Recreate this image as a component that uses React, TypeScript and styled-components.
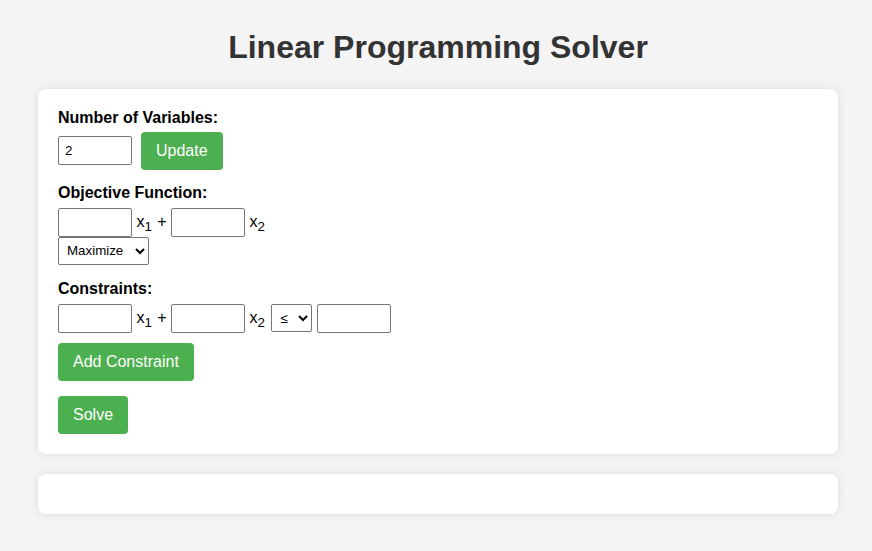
import React, { useState } from "react";
import styled, { createGlobalStyle } from "styled-components";

const GlobalStyle = createGlobalStyle`
  body {
    margin: 8px;
    padding-left: 4px;
    background-color: #f4f4f4;
    font-family: "Liberation Sans", Arial, sans-serif;
  }
`;

const Title = styled.h1`
  text-align: center;
  color: #333;
  font-size: 32px;
  font-weight: bold;
  margin: 21.44px 0 22.44px;
`;

const Card = styled.div`
  max-width: 800px;
  box-sizing: border-box;
  margin: 0 auto 20px;
  padding: 20px;
  background: #fff;
  border-radius: 8px;
  box-shadow: 0 0 10px rgba(0, 0, 0, 0.1);
  min-height: 40px;
`;

const Section = styled.div<{ $gap?: number }>`
  margin-bottom: ${(p) => p.$gap ?? 0}px;
`;

const Label = styled.label<{ $space?: number }>`
  display: block;
  font-weight: bold;
  font-size: 16px;
  line-height: 18px;
  color: #000;
  margin-bottom: ${(p) => p.$space ?? 6}px;
`;

const Row = styled.div`
  display: flex;
  align-items: center;
  gap: 9px;
`;

const Equation = styled.div`
  font-size: 16px;
  line-height: 18px;
  color: #000;
`;

const NumInput = styled.input`
  box-sizing: border-box;
  width: 74px;
  height: 29px;
  padding: 5px 6px;
  border: 1px solid #767676;
  border-radius: 2px;
  font-family: "Liberation Sans", Arial, sans-serif;
  font-size: 13.33px;
  color: #000;
  background: #fff;
  vertical-align: baseline;
`;

const Select = styled.select<{ $w: number; $block?: boolean }>`
  box-sizing: border-box;
  width: ${(p) => p.$w}px;
  height: 28px;
  padding: 0 4px;
  margin: ${(p) => (p.$block ? "0" : "0 0 0 1px")};
  display: ${(p) => (p.$block ? "block" : "inline-block")};
  border: 1px solid #767676;
  border-radius: 2px;
  background: #fff;
  color: #000;
  font-family: "Liberation Sans", Arial, sans-serif;
  font-size: 13.33px;
`;

const Sub = styled.sub`
  font-size: 13.33px;
  vertical-align: sub;
  line-height: 0;
  margin-right: 1px;
`;

const Button = styled.button<{ $gap?: number }>`
  display: block;
  height: 38px;
  padding: 0 15px;
  margin-bottom: ${(p) => p.$gap ?? 0}px;
  border: none;
  border-radius: 4px;
  background-color: #4caf50;
  color: #fff;
  font-family: "Liberation Sans", Arial, sans-serif;
  font-size: 16px;
  cursor: pointer;
`;

const Spacer = styled.div<{ $h: number }>`
  height: ${(p) => p.$h}px;
`;

function Term({ n }: { n: number }) {
  return (
    <>
      x<Sub>{n}</Sub>
    </>
  );
}

export default function App() {
  const [count, setCount] = useState("2");

  return (
    <>
      <GlobalStyle />
      <Title>Linear Programming Solver</Title>
      <Card>
        <Section $gap={14}>
          <Label $space={5}>Number of Variables:</Label>
          <Row>
            <NumInput value={count} onChange={(e) => setCount(e.target.value)} />
            <Button>Update</Button>
          </Row>
        </Section>

        <Section $gap={15}>
          <Label>Objective Function:</Label>
          <Equation>
            <NumInput /> <Term n={1} /> + <NumInput /> <Term n={2} />
          </Equation>
          <Select $w={91} $block defaultValue="max">
            <option value="max">Maximize</option>
            <option value="min">Minimize</option>
          </Select>
        </Section>

        <Section>
          <Label>Constraints:</Label>
          <Equation>
            <NumInput /> <Term n={1} /> + <NumInput /> <Term n={2} />{" "}
            <Select $w={41} defaultValue="le">
              <option value="le">≤</option>
              <option value="ge">≥</option>
              <option value="eq">=</option>
            </Select>{" "}
            <NumInput />
          </Equation>
          <Spacer $h={10} />
          <Button $gap={15}>Add Constraint</Button>
          <Button>Solve</Button>
        </Section>
      </Card>
      <Card />
    </>
  );
}
